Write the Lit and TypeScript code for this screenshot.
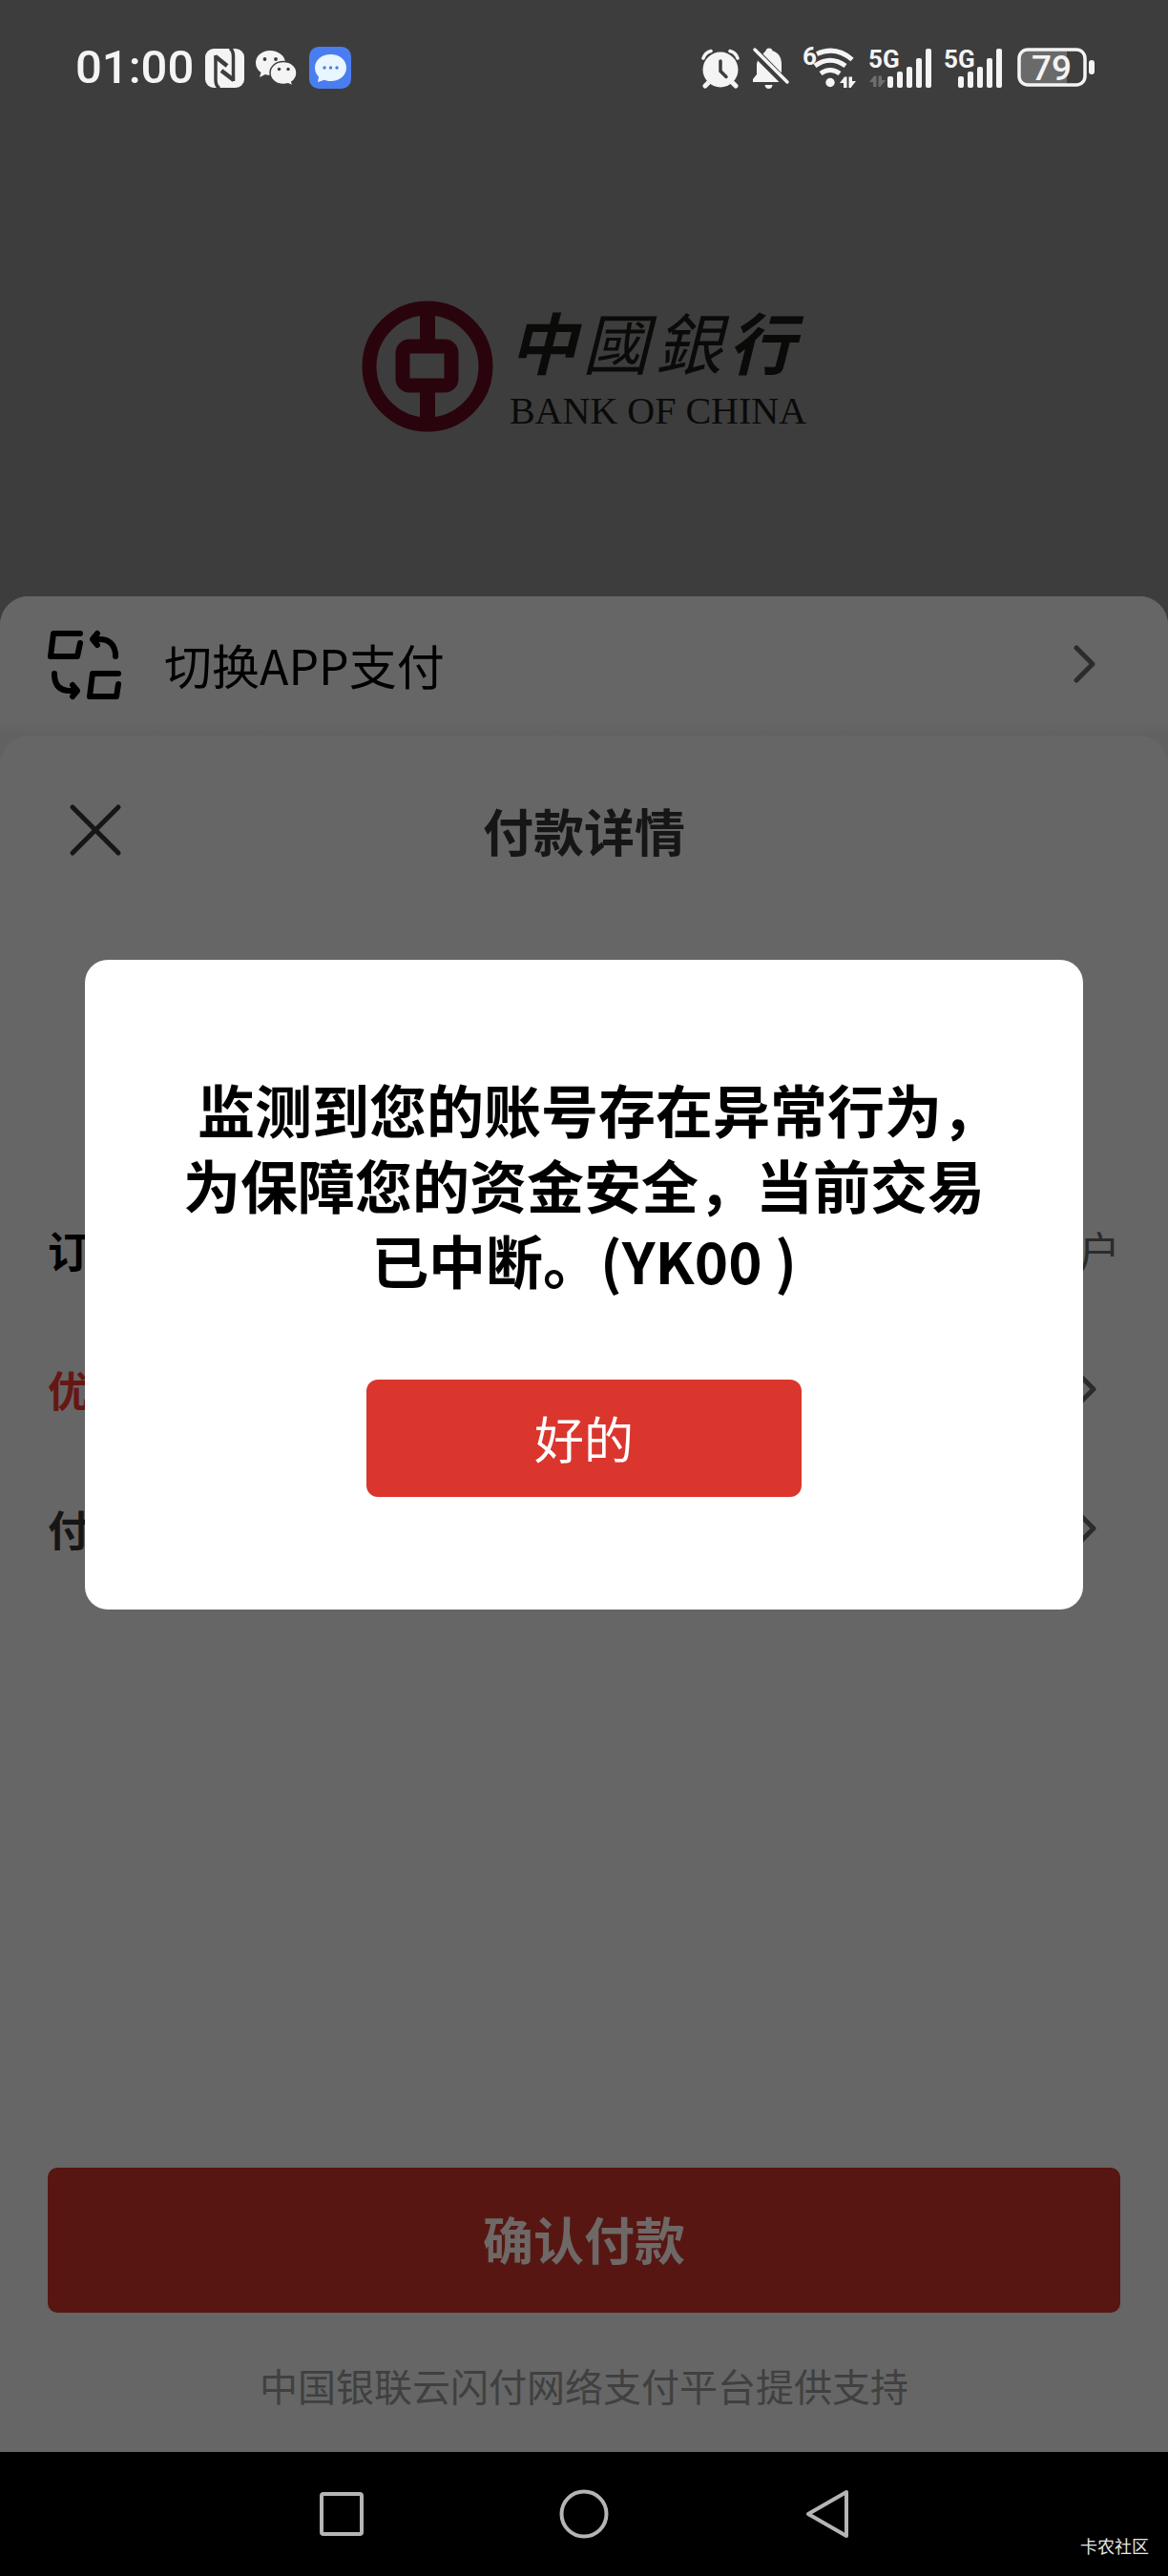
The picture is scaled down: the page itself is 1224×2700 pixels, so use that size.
import { LitElement, html, css, svg } from "lit";
import { customElement, property } from "lit/decorators.js";

const chevron = html`<svg class="chevron" viewBox="0 0 24 40" width="24" height="40" aria-hidden="true">
  <path d="M3 3 20 20 3 37" fill="none" stroke="#2b2b2b" stroke-width="5" stroke-linecap="round" stroke-linejoin="round" />
</svg>`;

const bars = (x: number) => svg`
  <rect x="${x}" y="29" width="6" height="12" rx="2" />
  <rect x="${x + 10}" y="24" width="6" height="17" rx="2" />
  <rect x="${x + 20}" y="19" width="6" height="22" rx="2" />
  <rect x="${x + 30}" y="10" width="6" height="31" rx="2" />
  <rect x="${x + 40}" y="0" width="6" height="41" rx="2" />`;

@customElement("status-bar")
export class StatusBar extends LitElement {
  @property() time = "01:00";
  @property() battery = "79";

  static styles = css`
    :host {
      display: flex;
      align-items: center;
      justify-content: space-between;
      height: 142px;
      padding: 0 76px 0 79px;
      box-sizing: border-box;
      color: #f4f4f4;
      font-family: Roboto, "Noto Sans", sans-serif;
    }
    .group { display: flex; align-items: center; gap: 12px; }
    .time { font-size: 49px; line-height: 56px; font-weight: 500; }
    svg { display: block; fill: currentColor; overflow: visible; }
    .net { font-family: "Liberation Sans Narrow", Roboto, sans-serif; font-size: 26px; font-weight: 700; }
    .charge { font-family: Roboto, sans-serif; font-size: 37px; font-weight: 500; }
  `;

  render() {
    return html`
      <div class="group">
        <span class="time">${this.time}</span>
        <svg width="41" height="41" viewBox="0 0 41 41" role="img" aria-label="NFC">
          <rect width="41" height="41" rx="9" />
          <g fill="none" stroke="#3d3d3d" stroke-width="3.500">
            <path d="M15 41.500Q11 39 11 33V7" />
            <path d="M26 -.5Q29.500 2 29.500 8V34" />
            <path d="M10.500 8 23 18M30 33 17 23" stroke-width="4.500" />
          </g>
        </svg>
        <svg width="44" height="41" viewBox="0 0 44 41" role="img" aria-label="WeChat">
          <path d="M15 2C6.500 2 0 7.500 0 15c0 4 2 7.500 5.500 10L4 30l6-3c2 .7 4 1 6 1 8.500 0 15-5.500 15-13S23.500 2 15 2Z" />
          <path d="M29 13.500c-8 0-14 5.200-14 12s6 12 14 12c1.800 0 3.500-.3 5-.8l5 2.500-1.200-4.300c3.300-2.200 5.200-5.500 5.200-9.400 0-6.800-6-12-14-12Z" stroke="#3d3d3d" stroke-width="1.500" />
          <g fill="#3d3d3d"><circle cx="9.500" cy="11" r="1.900" /><circle cx="21" cy="11" r="1.900" /><circle cx="24.500" cy="21.500" r="1.700" /><circle cx="34" cy="21.500" r="1.700" /></g>
        </svg>
        <svg width="44" height="44" viewBox="0 0 44 44" role="img" aria-label="Messages">
          <rect width="44" height="44" rx="10" fill="#4a7ef0" />
          <path d="M22.500 8C13 8 6 14 6 22c0 4 1.500 7 4 9.500L9 37l7-2.200c2 .8 4 1.200 6.500 1.200C32 36 39 30 39 22S32 8 22.500 8Z" fill="#e9f5ff" />
          <g fill="#4a80d8"><circle cx="16" cy="22" r="1.700" /><circle cx="22.500" cy="22" r="1.700" /><circle cx="29" cy="22" r="1.700" /></g>
        </svg>
      </div>
      <div class="group">
        <svg width="40" height="41" viewBox="0 0 40 41" role="img" aria-label="Alarm">
          <circle cx="20" cy="22" r="18.500" />
          <g fill="none" stroke="currentColor" stroke-linecap="round" stroke-width="3.500">
            <path d="M2 10Q4 4 10 2.500M38 10Q36 4 30 2.500" />
            <path d="M8 35 4 39M32 35l4 4" stroke-width="5" />
          </g>
          <path d="M20 13v10.500l6 6" fill="none" stroke="#3d3d3d" stroke-width="3.500" stroke-linecap="round" />
        </svg>
        <svg width="42" height="44" viewBox="0 0 42 44" role="img" aria-label="Muted">
          <path d="M19 1.500c2 0 3.200 1 3.500 2.800C28.500 6 32 11 32 18v9.500L12.500 7.500l3-3.200C16 2.500 17 1.500 19 1.500Z" />
          <path d="M7 14.500 29.500 37H2v-3l4-5V18Z" />
          <path d="M14.500 40h8q-.5 4-4 4t-4-4Z" />
          <path d="M4 3 38 37" stroke="currentColor" stroke-width="3.500" stroke-linecap="round" />
        </svg>
        <svg width="57" height="44" viewBox="0 0 57 44" role="img" aria-label="Wi-Fi 6">
          <text class="net" x="0" y="19">6</text>
          <g fill="none" stroke="currentColor" stroke-width="5" stroke-linecap="butt">
            <path d="M15 7.500Q35 -1.500 52 13.500" />
            <path d="M13 20Q29 8.500 45 20" />
            <path d="M19 28Q29 21 39 28" />
          </g>
          <circle cx="29" cy="37.500" r="4.700" />
          <path d="M39 38 44 31.500h2.500V43h-3.500V38ZM48.500 31.500H52V36h4l-5.500 7h-2Z" />
        </svg>
        <svg width="67" height="41" viewBox="0 0 67 41" role="img" aria-label="5G signal 1">
          <text class="net" x="0" y="20">5G</text>
          <path d="M1 35 6 28.500h2.500V40H5V35ZM10.500 28.500H14V33h4l-5.500 7h-2Z" fill="#6d6d6d" />
          ${bars(20)}
        </svg>
        <svg width="63" height="41" viewBox="0 0 63 41" role="img" aria-label="5G signal 2">
          <text class="net" x="0" y="20">5G</text>
          ${bars(15)}
        </svg>
        <svg width="84" height="42" viewBox="-2 0 84 42" role="img" aria-label="Battery">
          <path d="M11 2h41v37H11Q2 39 2 30V11Q2 2 11 2Z" fill="#6a6a6a" />
          <rect x="2" y="2" width="69" height="37" rx="9" fill="none" stroke="currentColor" stroke-width="3.500" />
          <rect x="75" y="13" width="6" height="15" rx="3" />
          <text class="charge" x="36" y="34" text-anchor="middle">${this.battery}</text>
        </svg>
      </div>
    `;
  }
}

@customElement("bank-logo")
export class BankLogo extends LitElement {
  static styles = css`
    :host { display: flex; align-items: center; gap: 17px; color: #0a0a09; }
    svg { display: block; }
    .name { display: flex; flex-direction: column; }
    .han {
      display: flex;
      justify-content: space-between;
      padding: 0 12px 6px 0;
      font-family: "Noto Sans CJK TC", sans-serif;
      font-size: 70px;
      line-height: 88px;
      font-style: italic;
    }
    .heavy { font-weight: 700; }
    .latin { font-family: "Liberation Serif", serif; font-size: 40px; line-height: 48px; }
  `;

  render() {
    return html`
      <svg width="138" height="138" viewBox="0 0 138 138" aria-hidden="true">
        <g fill="none" stroke="#2a040c">
          <circle cx="69" cy="69" r="61" stroke-width="15" />
          <path d="M69 14V46M69 92V124" stroke-width="16" />
          <rect x="43" y="48" width="51" height="41" rx="7" stroke-width="15" />
        </g>
      </svg>
      <div class="name">
        <div class="han"><span class="heavy">中</span><span>國</span><span>銀</span><span class="heavy">行</span></div>
        <div class="latin">BANK OF CHINA</div>
      </div>
    `;
  }
}

@customElement("app-root")
export class AppRoot extends LitElement {
  static styles = css`
    :host {
      display: flex;
      flex-direction: column;
      position: relative;
      min-height: 100vh;
      background: #3d3d3d;
      color: #000;
      font-family: "Noto Sans CJK SC", sans-serif;
    }
    button { font: inherit; color: inherit; border: 0; padding: 0; background: none; cursor: pointer; }
    svg { display: block; }
    .brand { display: flex; justify-content: center; align-items: center; height: 483px; }
    .sheet {
      flex: 1;
      display: flex;
      flex-direction: column;
      border-radius: 30px 30px 0 0;
      background: #616161;
      overflow: hidden;
    }
    .switch {
      display: flex;
      align-items: center;
      gap: 42px;
      height: 146px;
      padding: 0 75px 4px 48px;
      background: linear-gradient(#666 90%, #616161);
      font-size: 50px;
      line-height: 72px;
      text-align: left;
    }
    .grow { flex: 1; }
    .details {
      flex: 1;
      display: flex;
      flex-direction: column;
      padding: 0 50px;
      border-radius: 30px 30px 0 0;
      background: #666;
    }
    .heading {
      display: grid;
      grid-template-columns: 100px 1fr 100px;
      align-items: center;
      height: 197px;
    }
    .close { justify-self: center; }
    h1 { margin: 0; font-size: 53px; line-height: 72px; font-weight: 700; text-align: center; color: #161616; }
    .rows { margin: 269px 0 0; }
    .row { display: flex; align-items: center; justify-content: space-between; height: 146px; font-size: 44px; line-height: 64px; }
    .row dt { font-weight: 700; }
    .row dd { margin: 0; color: #2b2b2b; }
    .row .arrow { padding-right: 24px; }
    .promo { color: #661714; }
    .dark { color: #161616; }
    .foot { margin-top: auto; }
    .confirm {
      display: block;
      width: 100%;
      height: 152px;
      padding-bottom: 4px;
      border-radius: 10px;
      background: #571612;
      color: #6e6866;
      font-size: 53px;
      line-height: 72px;
      font-weight: 700;
    }
    .support { margin: 0; padding: 46px 0 40px; font-size: 40px; line-height: 60px; text-align: center; color: #404040; }
    .nav {
      display: grid;
      grid-template-columns: 1fr 555px 1fr;
      align-items: center;
      height: 130px;
      background: #000;
    }
    .keys { grid-column: 2; display: flex; justify-content: space-between; }
    .mark { justify-self: end; align-self: end; padding: 0 20px 20px 0; font-size: 18px; line-height: 24px; color: #e6e6e6; }
    .overlay {
      position: absolute;
      inset: 0;
      display: grid;
      align-items: center;
      padding: 0 89px 8px;
    }
    .dialog {
      display: flex;
      flex-direction: column;
      align-items: center;
      gap: 87px;
      padding: 116px 90px 118px;
      border-radius: 24px;
      background: #fff;
    }
    .message { margin: 0; font-size: 60px; line-height: 79px; font-weight: 700; text-align: center; }
    .half { font-feature-settings: "halt"; }
    .ok {
      width: 456px;
      height: 123px;
      border-radius: 12px;
      background: #da362e;
      color: #fff;
      font-size: 52px;
      line-height: 72px;
    }
  `;

  render() {
    return html`
      <status-bar></status-bar>
      <div class="brand"><bank-logo></bank-logo></div>
      <main class="sheet">
        <button class="switch">
          <svg width="82" height="76" viewBox="0 0 82 76" aria-hidden="true">
            <g fill="none" stroke="#000" stroke-width="6" stroke-linecap="round" stroke-linejoin="round">
              <path d="M36 6H8L5 30H33L36 16" />
              <path d="M76 48H49L46 72H74L76 59" />
              <path d="M73 30V27Q71 12 56 12H50M54 6 49 12 54 18" />
              <path d="M9 48V50Q10 66 25 66H31M28 60 33 66 28 72" />
            </g>
          </svg>
          <span class="grow">切换APP支付</span>
          ${chevron}
        </button>
        <section class="details">
          <header class="heading">
            <button class="close" aria-label="关闭">
              <svg width="56" height="56" viewBox="0 0 56 56" aria-hidden="true">
                <path d="M4 4 52 52M52 4 4 52" stroke="#161616" stroke-width="5" stroke-linecap="round" />
              </svg>
            </button>
            <h1>付款详情</h1>
          </header>
          <dl class="rows">
            <div class="row"><dt>订</dt><dd>户</dd></div>
            <div class="row"><dt class="promo">优</dt><dd class="arrow">${chevron}</dd></div>
            <div class="row"><dt class="dark">付</dt><dd class="arrow">${chevron}</dd></div>
          </dl>
          <div class="foot">
            <button class="confirm">确认付款</button>
            <p class="support">中国银联云闪付网络支付平台提供支持</p>
          </div>
        </section>
      </main>
      <nav class="nav">
        <div class="keys">
          <svg width="46" height="52" viewBox="0 0 46 52" role="img" aria-label="Recents"><rect x="2" y="5" width="42" height="42" rx="2" fill="none" stroke="#b5b5b5" stroke-width="4" /></svg>
          <svg width="52" height="52" viewBox="0 0 52 52" role="img" aria-label="Home"><circle cx="26" cy="26" r="23.500" fill="none" stroke="#b5b5b5" stroke-width="4" /></svg>
          <svg width="46" height="52" viewBox="0 0 46 52" role="img" aria-label="Back"><path d="M43 3V49L3 26Z" fill="none" stroke="#b5b5b5" stroke-width="4" stroke-linejoin="round" /></svg>
        </div>
        <span class="mark">卡农社区</span>
      </nav>
      <div class="overlay">
        <div class="dialog" role="alertdialog" aria-modal="true" aria-labelledby="message">
          <p class="message" id="message">监测到您的账号存在异常行为<span class="half">，</span>为保障您的资金安全，当前交易已中断。(YK00 )</p>
          <button class="ok">好的</button>
        </div>
      </div>
    `;
  }
}
